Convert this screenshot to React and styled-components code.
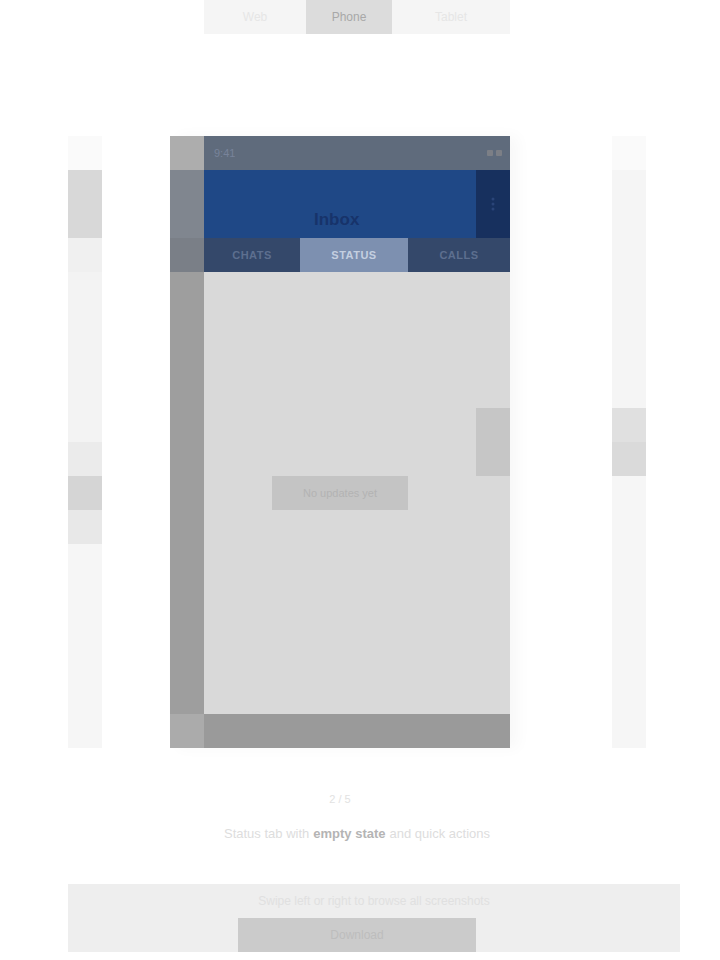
import React from "react";
import styled, { createGlobalStyle } from "styled-components";

const GlobalStyle = createGlobalStyle`
  html, body {
    margin: 0;
    padding: 0;
    background: #ffffff;
  }
  * {
    box-sizing: border-box;
  }
`;

const Page = styled.div`
  width: 720px;
  height: 960px;
  overflow: hidden;
  background: #ffffff;
  font-family: "Liberation Sans", Arial, sans-serif;
  display: flex;
  flex-direction: column;
`;

const Segmented = styled.div`
  margin-left: 204px;
  width: 306px;
  height: 34px;
  display: flex;
  background: #f5f5f5;
`;

const Segment = styled.div`
  width: ${p => p.width}px;
  display: flex;
  align-items: center;
  justify-content: center;
  font-size: 12px;
  color: ${p => (p.active ? "#a8a8a8" : "#e6e6e6")};
  background: ${p => (p.active ? "#dcdcdc" : "transparent")};
`;

const Carousel = styled.div`
  margin-top: 102px;
  padding-left: 68px;
  height: 612px;
  display: flex;
`;

const Peek = styled.div`
  width: 34px;
  display: flex;
  flex-direction: column;
`;

const PeekPart = styled.div`
  height: ${p => p.h}px;
  background: ${p => p.tone};
`;

const Slide = styled.div`
  width: 340px;
  margin: 0 102px 0 68px;
  display: flex;
  box-shadow: 8px 0 14px rgba(0, 0, 0, 0.03);
`;

const Bezel = styled.div`
  width: 34px;
  display: flex;
  flex-direction: column;
`;

const Screen = styled.div`
  width: 306px;
  display: flex;
  flex-direction: column;
`;

const StatusBar = styled.div`
  height: 34px;
  background: #5f6b7c;
  display: flex;
  align-items: center;
  justify-content: space-between;
  padding: 0 8px 0 10px;
  font-size: 11px;
  color: #78839a;
`;

const StatusIcons = styled.div`
  display: flex;
  gap: 3px;
  align-items: center;
`;

const Dot = styled.span`
  width: 6px;
  height: 6px;
  background: #7c7f86;
  border-radius: 1px;
`;

const AppBar = styled.div`
  height: 68px;
  background: #1f4886;
  display: flex;
`;

const AppTitle = styled.div`
  flex: 1;
  display: flex;
  align-items: flex-end;
  padding: 0 0 8px 110px;
  font-size: 17px;
  font-weight: bold;
  color: #17336a;
`;

const ActionSlot = styled.div`
  width: 34px;
  background: #17305e;
  display: flex;
  align-items: center;
  justify-content: center;
`;

const TabBar = styled.div`
  height: 34px;
  background: #34486a;
  display: flex;
`;

const Tab = styled.div`
  width: ${p => p.width}px;
  display: flex;
  align-items: center;
  justify-content: center;
  font-size: 11px;
  font-weight: bold;
  letter-spacing: 0.5px;
  color: ${p => (p.active ? "#c4cfe0" : "#5d6f8f")};
  background: ${p => (p.active ? "#7d90b0" : "transparent")};
`;

const Body = styled.div`
  position: relative;
  height: 442px;
  background: #d9d9d9;
  padding: 204px 0 0 68px;
`;

const EmptyNote = styled.div`
  width: 136px;
  height: 34px;
  background: #c4c4c4;
  display: flex;
  align-items: center;
  justify-content: center;
  font-size: 11px;
  color: #b3b3b3;
`;

const EdgeHandle = styled.div`
  position: absolute;
  right: 0;
  top: 136px;
  width: 34px;
  height: 68px;
  background: #c6c6c6;
`;

const NavBar = styled.div`
  height: 34px;
  background: #9a9a9a;
`;

const Caption = styled.div`
  margin: 34px 0 0 170px;
  width: 374px;
  display: flex;
  flex-direction: column;
  align-items: center;
`;

const Counter = styled.div`
  height: 34px;
  display: flex;
  align-items: center;
  padding-right: 34px;
  font-size: 11px;
  color: #e2e2e2;
`;

const CaptionText = styled.div`
  height: 34px;
  display: flex;
  align-items: center;
  font-size: 13px;
  color: #dddddd;

  strong {
    color: #b4b4b4;
    margin: 0 4px;
  }
`;

const Footer = styled.div`
  margin: 34px 0 0 68px;
  width: 612px;
  height: 68px;
  background: #eeeeee;
  display: flex;
  flex-direction: column;
`;

const FooterHint = styled.div`
  height: 34px;
  display: flex;
  align-items: center;
  justify-content: center;
  font-size: 12px;
  color: #e0e0e0;
`;

const FooterAction = styled.button`
  margin-left: 170px;
  width: 238px;
  height: 34px;
  border: 0;
  background: #cbcbcb;
  font-family: inherit;
  font-size: 12px;
  color: #bdbdbd;
  padding: 0;
`;

const leftPeek = [
  [34, "#fafafa"],
  [68, "#d8d8d8"],
  [34, "#f0f0f0"],
  [170, "#f3f3f3"],
  [34, "#ebebeb"],
  [34, "#d5d5d5"],
  [34, "#e8e8e8"],
  [204, "#f6f6f6"]
];

const rightPeek = [
  [34, "#fafafa"],
  [238, "#f5f5f5"],
  [34, "#e0e0e0"],
  [34, "#dadada"],
  [272, "#f6f6f6"]
];

const bezel = [
  [34, "#adadad"],
  [68, "#80868f"],
  [34, "#7a7f87"],
  [442, "#9e9e9e"],
  [34, "#ababab"]
];

const App = () => {
  return (
    <Page>
      <GlobalStyle />
      <Segmented>
        <Segment width={102}>Web</Segment>
        <Segment width={86} active>
          Phone
        </Segment>
        <Segment width={118}>Tablet</Segment>
      </Segmented>

      <Carousel>
        <Peek>
          {leftPeek.map(([h, tone], i) => (
            <PeekPart key={i} h={h} tone={tone} />
          ))}
        </Peek>

        <Slide>
          <Bezel>
            {bezel.map(([h, tone], i) => (
              <PeekPart key={i} h={h} tone={tone} />
            ))}
          </Bezel>
          <Screen>
            <StatusBar>
              <span>9:41</span>
              <StatusIcons>
                <Dot />
                <Dot />
              </StatusIcons>
            </StatusBar>
            <AppBar>
              <AppTitle>Inbox</AppTitle>
              <ActionSlot>
                <svg width="4" height="14" viewBox="0 0 4 14">
                  <circle cx="2" cy="2" r="1.5" fill="#2a4478" />
                  <circle cx="2" cy="7" r="1.5" fill="#2a4478" />
                  <circle cx="2" cy="12" r="1.5" fill="#2a4478" />
                </svg>
              </ActionSlot>
            </AppBar>
            <TabBar>
              <Tab width={96}>CHATS</Tab>
              <Tab width={108} active>
                STATUS
              </Tab>
              <Tab width={102}>CALLS</Tab>
            </TabBar>
            <Body>
              <EmptyNote>No updates yet</EmptyNote>
              <EdgeHandle />
            </Body>
            <NavBar />
          </Screen>
        </Slide>

        <Peek>
          {rightPeek.map(([h, tone], i) => (
            <PeekPart key={i} h={h} tone={tone} />
          ))}
        </Peek>
      </Carousel>

      <Caption>
        <Counter>2 / 5</Counter>
        <CaptionText>
          Status tab with
          <strong>empty state</strong>
          and quick actions
        </CaptionText>
      </Caption>

      <Footer>
        <FooterHint>Swipe left or right to browse all screenshots</FooterHint>
        <FooterAction>Download</FooterAction>
      </Footer>
    </Page>
  );
};

export default App;
